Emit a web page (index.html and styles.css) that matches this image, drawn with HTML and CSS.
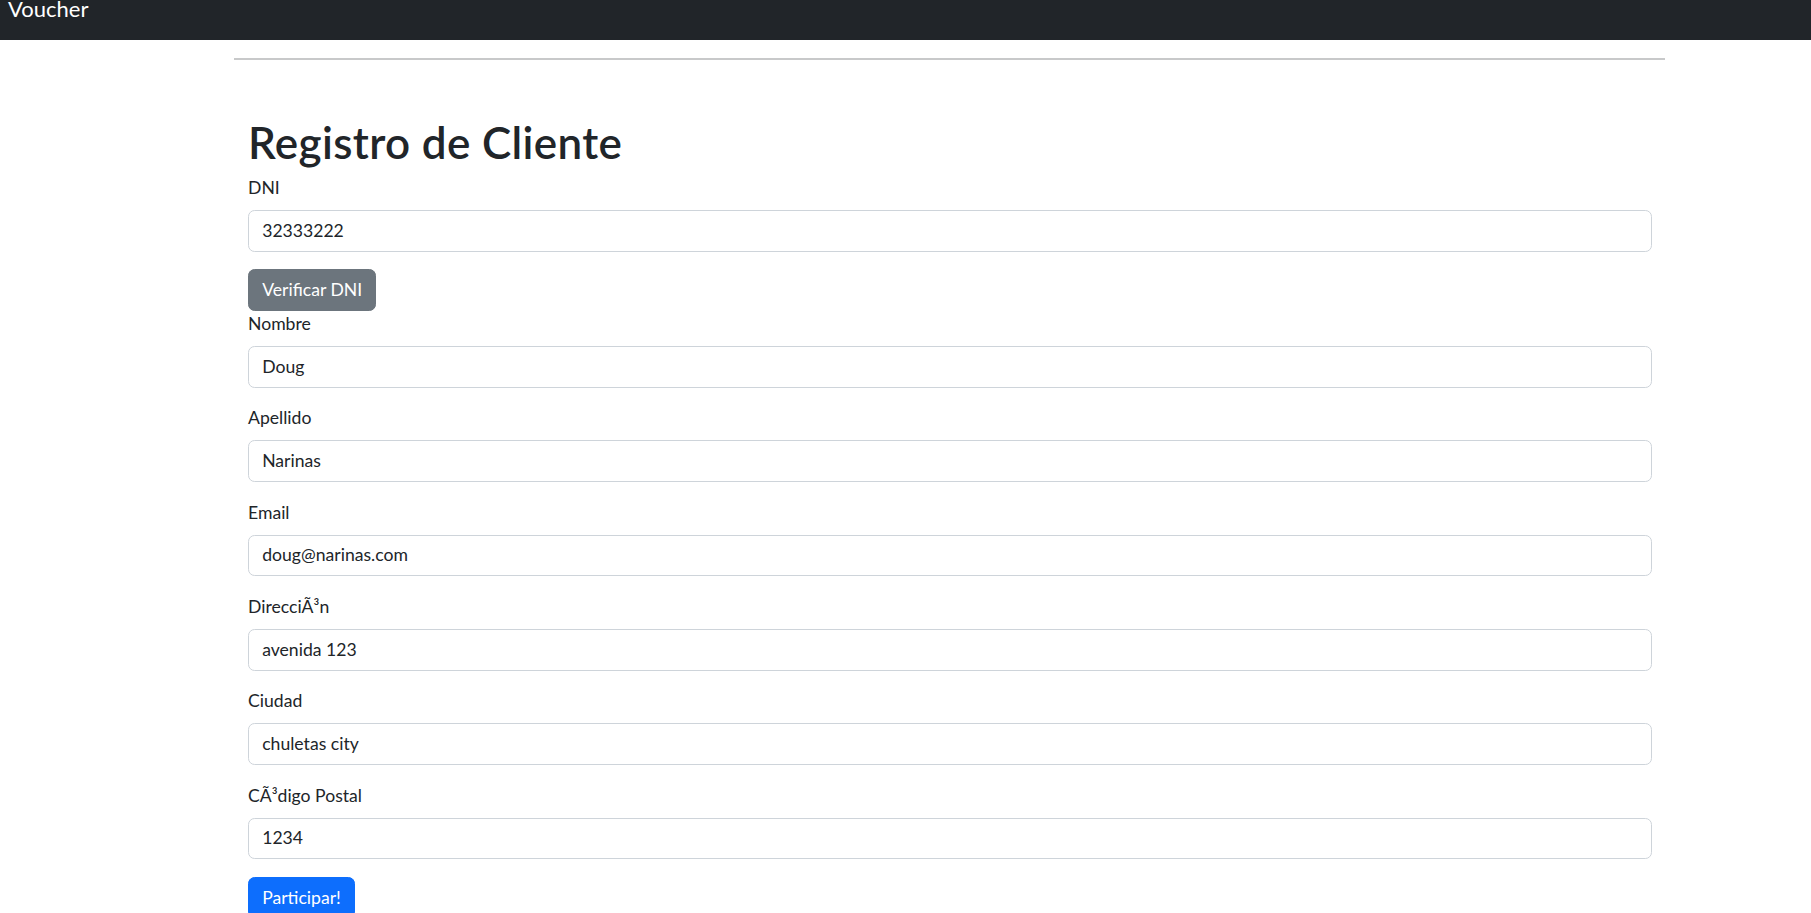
FILE: index.html
```html
<!DOCTYPE html>
<html lang="es">
<head>
<meta charset="utf-8">
<title>Voucher</title>
<link rel="stylesheet" href="styles.css">
</head>
<body>
<nav class="navbar"><span class="brand">Voucher</span></nav>
<div class="container">
  <hr class="rule">
  <main class="content">
    <h1 class="title">Registro de Cliente</h1>
    <form class="form" onsubmit="return false">
      <div class="group">
        <label class="label" for="dni">DNI</label>
        <input class="control" id="dni" type="text" value="32333222">
      </div>
      <button class="btn btn-secondary" type="button">Verificar DNI</button>
      <div class="group">
        <label class="label" for="nombre">Nombre</label>
        <input class="control" id="nombre" type="text" value="Doug">
      </div>
      <div class="group">
        <label class="label" for="apellido">Apellido</label>
        <input class="control" id="apellido" type="text" value="Narinas">
      </div>
      <div class="group">
        <label class="label" for="email">Email</label>
        <input class="control" id="email" type="text" value="doug@narinas.com">
      </div>
      <div class="group">
        <label class="label" for="direccion">DirecciÃ³n</label>
        <input class="control" id="direccion" type="text" value="avenida 123">
      </div>
      <div class="group">
        <label class="label" for="ciudad">Ciudad</label>
        <input class="control" id="ciudad" type="text" value="chuletas city">
      </div>
      <div class="group">
        <label class="label" for="cp">CÃ³digo Postal</label>
        <input class="control" id="cp" type="text" value="1234">
      </div>
      <button class="btn btn-primary" type="submit">Participar!</button>
    </form>
  </main>
</div>
</body>
</html>
```

FILE: styles.css
```css
* { box-sizing: border-box; }

html, body {
  margin: 0;
  padding: 0;
  background: #fff;
}

body {
  font-family: Lato, "Liberation Sans", sans-serif;
  font-size: 17.6px;
  line-height: 26.4px;
  color: #212529;
}

.navbar {
  height: 40px;
  background: #212529;
}

.brand {
  display: block;
  padding-left: 8px;
  font-size: 22px;
  line-height: 18px;
  color: #fff;
}

.container {
  margin-left: 234px;
  width: 1431px;
}

.rule {
  margin: 18px 0 0 0;
  height: 2px;
  border: 0;
  background: #c8c9ca;
}

.content {
  padding: 56px 13px 0 14px;
}

.title {
  margin: 0 0 6px 0;
  font-size: 44px;
  line-height: 52.8px;
  font-weight: 600;
  letter-spacing: 0.35px;
}

.form {
  margin: 0;
}

.group {
  margin-bottom: 17.6px;
}

.label {
  display: block;
  margin-bottom: 8.8px;
}

.control {
  display: block;
  width: 100%;
  padding: 6.6px 13.2px;
  font-family: inherit;
  font-size: 17.6px;
  line-height: 26.4px;
  color: #212529;
  background: #fff;
  border: 1px solid #ced4da;
  border-radius: 6.6px;
  outline: none;
}

.btn {
  display: inline-block;
  padding: 6.6px 13.2px;
  font-family: inherit;
  font-size: 17.6px;
  line-height: 26.4px;
  color: #fff;
  border: 1px solid transparent;
  border-radius: 6.6px;
  cursor: pointer;
}

.btn-secondary {
  background: #6c757d;
  border-color: #6c757d;
}

.btn-primary {
  background: #0d6efd;
  border-color: #0d6efd;
}
```
